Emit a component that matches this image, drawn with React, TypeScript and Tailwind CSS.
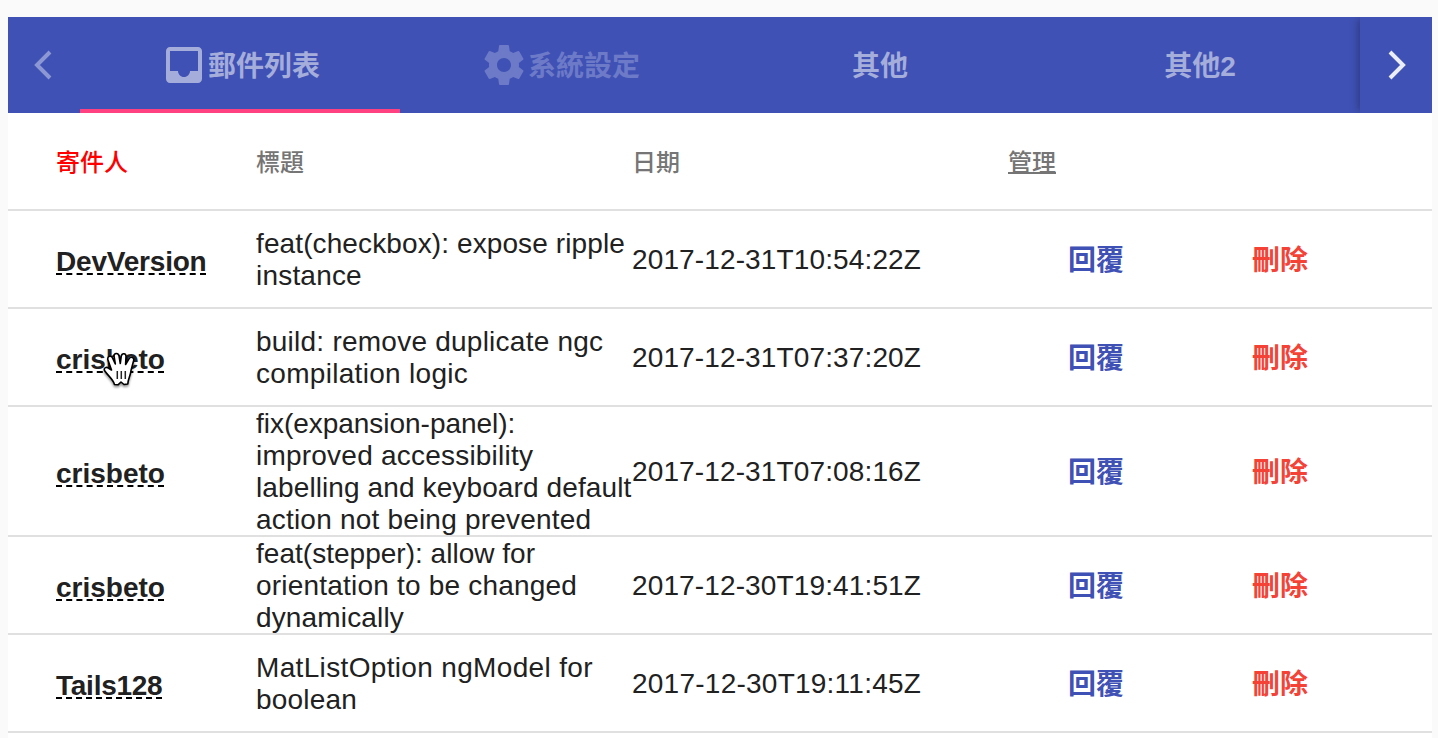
import React from "react";

type Line = { text: string; cls: string };
type Mail = { sender: string; senderCls: string; title: Line[]; date: string; dateCls: string; height: string };

const mails: Mail[] = [
  {
    sender: "DevVersion", senderCls: "w-[150px] tracking-[-0.2px]", date: "2017-12-31T10:54:22Z", dateCls: "tracking-[0.13px]", height: "h-[98px]",
    title: [{ text: "feat(checkbox): expose ripple", cls: "tracking-[0.11px]" }, { text: "instance", cls: "tracking-[0.2px]" }],
  },
  {
    sender: "crisbeto", senderCls: "w-[108px]", date: "2017-12-31T07:37:20Z", dateCls: "tracking-[0.13px]", height: "h-[98px]",
    title: [{ text: "build: remove duplicate ngc", cls: "tracking-[0.24px]" }, { text: "compilation logic", cls: "tracking-[0.3px]" }],
  },
  {
    sender: "crisbeto", senderCls: "w-[108px]", date: "2017-12-31T07:08:16Z", dateCls: "tracking-[0.13px]", height: "h-[130px]",
    title: [
      { text: "fix(expansion-panel):", cls: "tracking-[-0.03px]" },
      { text: "improved accessibility", cls: "tracking-[0.22px]" },
      { text: "labelling and keyboard default", cls: "tracking-[0.11px]" },
      { text: "action not being prevented", cls: "tracking-[0.2px]" },
    ],
  },
  {
    sender: "crisbeto", senderCls: "w-[108px]", date: "2017-12-30T19:41:51Z", dateCls: "tracking-[0.13px]", height: "h-[98px]",
    title: [
      { text: "feat(stepper): allow for", cls: "tracking-[0.02px]" },
      { text: "orientation to be changed", cls: "tracking-[0.2px]" },
      { text: "dynamically", cls: "tracking-[0.15px]" },
    ],
  },
  {
    sender: "Tails128", senderCls: "w-[106px] tracking-[-0.25px]", date: "2017-12-30T19:11:45Z", dateCls: "tracking-[0.24px]", height: "h-[98px]",
    title: [{ text: "MatListOption ngModel for", cls: "tracking-[0.34px]" }, { text: "boolean", cls: "tracking-[0.2px]" }],
  },
];

function InboxIcon() {
  return (
    <svg viewBox="0 0 24 24" className="size-12 shrink-0" fill="currentColor">
      <path d="M19 3H4.99c-1.11 0-1.98.89-1.98 2L3 19c0 1.1.88 2 1.99 2H19c1.1 0 2-.9 2-2V5c0-1.11-.9-2-2-2zm0 12h-4c0 1.66-1.35 3-3 3s-3-1.34-3-3H4.99V5H19v10z" />
    </svg>
  );
}

function SettingsIcon() {
  return (
    <svg viewBox="0 0 24 24" className="size-12 shrink-0" fill="currentColor">
      <path d="M19.43 12.98c.04-.32.07-.64.07-.98s-.03-.66-.07-.98l2.11-1.65c.19-.15.24-.42.12-.64l-2-3.46c-.12-.22-.39-.3-.61-.22l-2.49 1c-.52-.4-1.08-.73-1.69-.98l-.38-2.65C14.46 2.18 14.25 2 14 2h-4c-.25 0-.46.18-.49.42l-.38 2.65c-.61.25-1.17.59-1.69.98l-2.49-1c-.23-.09-.49 0-.61.22l-2 3.46c-.13.22-.07.49.12.64l2.11 1.65c-.04.32-.07.65-.07.98s.03.66.07.98l-2.11 1.65c-.19.15-.24.42-.12.64l2 3.46c.12.22.39.3.61.22l2.49-1c.52.4 1.08.73 1.69.98l.38 2.65c.03.24.24.42.49.42h4c.25 0 .46-.18.49-.42l.38-2.65c.61-.25 1.17-.59 1.69-.98l2.49 1c.23.09.49 0 .61-.22l2-3.46c.12-.22.07-.49-.12-.64l-2.11-1.65zM12 15.5c-1.93 0-3.5-1.57-3.5-3.5s1.57-3.5 3.5-3.5 3.5 1.57 3.5 3.5-1.57 3.5-3.5 3.5z" />
    </svg>
  );
}

function GrabCursor() {
  return (
    <svg viewBox="0 0 34 38" className="pointer-events-none absolute left-[103px] top-[351px] h-[38px] w-[34px] drop-shadow-[0_2px_1px_rgba(0,0,0,0.4)]">
      <path
        d="M11.5 33.5 C10 28 5 25 1.5 19.5 C.5 16.5 3.5 15.5 6 17.5 L8.5 19 L4.8 8.5 C4.3 5 8.2 4 9.5 7 L12.3 13 L11 5 C11 1.8 15.3 1.5 16 4.8 L17.3 12.5 L18.3 5 C19 1.6 23.2 2.2 23 5.5 L22.6 13.5 L26 7.8 C27.8 5 31.6 6.5 30.6 9.8 L28 19.5 C27.5 25 25 28 24.8 33 L21 33.5 L18 31 L15 33.8 Z"
        fill="#fff" stroke="#000" strokeWidth="1.6" strokeLinejoin="round"
      />
      <path d="M14.3 20v8M18.3 20v8M22.3 20v8" stroke="#222" strokeWidth="1.5" />
    </svg>
  );
}

const tab = "flex w-80 items-center justify-center text-[28px] font-bold";
const label = "pt-[3px]";
const action = "flex w-44 justify-center text-[28px] leading-8 font-bold";

export default function App() {
  return (
    <div className="relative h-[738px] w-[1438px] overflow-hidden bg-[#fafafa] px-2 pt-[17px] font-['Liberation_Sans','Noto_Sans_CJK_TC',sans-serif]">
      <div className="w-[1424px]">
        <nav className="flex h-24 bg-[#3f51b5]">
          <div className="flex w-[72px] items-center justify-center text-[#8c97d3]">
            <svg viewBox="0 0 18 30" className="-ml-0.5 h-[30px] w-[18px]" fill="none" stroke="currentColor" strokeWidth="4">
              <path d="M16 2L3 15l13 13" />
            </svg>
          </div>
          <div className={`${tab} border-b-4 border-[#ff4081] pt-1 text-[#a5addb]`}><InboxIcon /><span className={label}>郵件列表</span></div>
          <div className={`${tab} text-[#6d7ac7]`}><SettingsIcon /><span className={label}>系統設定</span></div>
          <div className={`${tab} text-[#a5addb]`}><span className={label}>其他</span></div>
          <div className={`${tab} text-[#a5addb]`}><span className={label}>其他2</span></div>
          <div className="flex w-[72px] items-center justify-center text-[#ebedf8] shadow-[-4px_0_8px_-2px_rgba(0,0,0,0.28)] [clip-path:inset(0_0_0_-12px)]">
            <svg viewBox="0 0 18 30" className="ml-0.5 h-[30px] w-[18px]" fill="none" stroke="currentColor" strokeWidth="4">
              <path d="M2 2l13 13L2 28" />
            </svg>
          </div>
        </nav>
        <div className="h-[640px] bg-white">
          <div className="flex h-[98px] items-center border-b-2 border-[#e0e0e0] pt-1 pl-12 text-2xl font-medium text-[#757575]">
            <div className="w-[200px] text-[#ff0000]">寄件人</div>
            <div className="w-[376px]">標題</div>
            <div className="w-[376px]">日期</div>
            <div className="underline decoration-2">管理</div>
          </div>
          {mails.map((m) => (
            <div key={m.date} className={`${m.height} flex items-center border-b-2 border-[#e0e0e0] pl-12 text-[28px] leading-8 text-[#212121]`}>
              <div className="w-[200px]">
                <div className={`${m.senderCls} mt-[3px] h-[29px] border-b-2 border-dashed border-black font-bold whitespace-nowrap`}>{m.sender}</div>
              </div>
              <div className="-mb-0.5 w-[376px]">
                {m.title.map((l) => <div key={l.text} className={`${l.cls} whitespace-nowrap`}>{l.text}</div>)}
              </div>
              <div className={`${m.dateCls} w-[376px] pt-0.5`}>{m.date}</div>
              <div className="flex gap-2 pt-[3px]">
                <div className={`${action} text-[#3f51b5]`}>回覆</div>
                <div className={`${action} text-[#f44336]`}>刪除</div>
              </div>
            </div>
          ))}
        </div>
      </div>
      <GrabCursor />
    </div>
  );
}
